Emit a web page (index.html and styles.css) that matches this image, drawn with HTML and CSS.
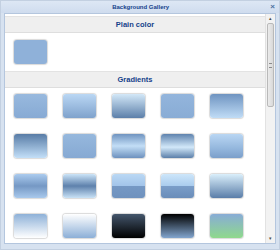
FILE: index.html
```html
<!DOCTYPE html>
<html lang="en">
<head>
    <meta charset="UTF-8">
    <title>Background Gallery</title>
    <link rel="stylesheet" href="styles.css">
</head>
<body>
    <div class="window">
        <div class="titlebar">
            <span class="title">Background Gallery</span>
            <span class="close">&#215;</span>
        </div>
        <div class="body">
            <div class="content">
                <div class="section-header">Plain color</div>
                <div class="plain">
                    <div class="tile" style="background: #8fb1d9;"></div>
                </div>
                <div class="section-header">Gradients</div>
                <div class="grid">
                    <div class="tile" style="background: linear-gradient(#98b9de, #87aad4);"></div>
                    <div class="tile" style="background: linear-gradient(#bad7f4, #7fa2cc);"></div>
                    <div class="tile" style="background: linear-gradient(#d3e8f8, #5c7fa9);"></div>
                    <div class="tile" style="background: linear-gradient(#93b5dc, #89acd5);"></div>
                    <div class="tile" style="background: linear-gradient(#6f94c1, #c0dcf6);"></div>

                    <div class="tile" style="background: linear-gradient(#587ca6, #c3dff8);"></div>
                    <div class="tile" style="background: linear-gradient(#96b8dd, #86a9d3);"></div>
                    <div class="tile" style="background: linear-gradient(#7094c0, #c3def6 50%, #6d91be);"></div>
                    <div class="tile" style="background: linear-gradient(#5f83ae, #d2e8f9 55%, #5b7fa9);"></div>
                    <div class="tile" style="background: linear-gradient(#b9d6f3, #94b7dd 60%, #7b9fca);"></div>

                    <div class="tile" style="background: linear-gradient(#abcbee, #7598c4 50%, #a9c9ec);"></div>
                    <div class="tile" style="background: linear-gradient(#cbe4f8, #5e81ac 50%, #c9e2f6);"></div>
                    <div class="tile" style="background: linear-gradient(#bad8f4, #a3c5ea 48%, #7598c4 52%, #6f92be);"></div>
                    <div class="tile" style="background: linear-gradient(#cde6fa, #abcdee 48%, #7a9dc8 52%, #6a8db9);"></div>
                    <div class="tile" style="background: linear-gradient(#daeffb, #5a7da8);"></div>

                    <div class="tile" style="background: linear-gradient(#8eb1d8, #ffffff);"></div>
                    <div class="tile" style="background: linear-gradient(#ffffff, #8cafd7);"></div>
                    <div class="tile" style="background: linear-gradient(#44566c, #000000);"></div>
                    <div class="tile" style="background: linear-gradient(#000000, #82a5ce);"></div>
                    <div class="tile" style="background: linear-gradient(#88acd6, #8fd98c);"></div>
                </div>
            </div>
            <div class="scrollbar">
                <span class="arrow">&#9652;</span>
                <div class="track">
                    <div class="thumb"><span class="grip"></span></div>
                </div>
                <span class="arrow">&#9662;</span>
            </div>
        </div>
    </div>
</body>
</html>
```

FILE: styles.css
```css
html, body {
    margin: 0;
    padding: 0;
    background: #ffffff;
}
.window {
    width: 280px;
    height: 250px;
    box-sizing: border-box;
    border: 1px solid #c3d0e1;
    background: #d7e2f0;
    display: flex;
    flex-direction: column;
    font-family: "Liberation Sans", Arial, sans-serif;
}
.titlebar {
    height: 12px;
    display: flex;
    align-items: center;
    padding: 0 4px;
    background: linear-gradient(#dde7f4, #cfdcee);
}
.title {
    flex: 1;
    text-align: center;
    font-size: 6px;
    font-weight: bold;
    color: #15428b;
    padding-left: 6px;
}
.close {
    font-size: 8px;
    font-weight: bold;
    color: #4d6f9e;
    line-height: 8px;
}
.body {
    flex: 1;
    display: flex;
    margin: 0 3px 5px 3px;
    border: 1px solid #b4c6de;
    background: #ffffff;
    overflow: hidden;
}
.content {
    flex: 1;
    overflow: hidden;
    padding-top: 2px;
}
.section-header {
    height: 15px;
    line-height: 15px;
    background: #efefef;
    border-top: 1px solid #e3e3e3;
    border-bottom: 1px solid #dedede;
    text-align: center;
    font-size: 7.5px;
    font-weight: bold;
    color: #15428b;
}
.plain {
    padding: 7px 0 7px 9px;
}
.grid {
    display: grid;
    grid-template-columns: repeat(5, 33px);
    column-gap: 16px;
    row-gap: 16px;
    padding: 6px 0 0 9px;
}
.tile {
    width: 33px;
    height: 24px;
    border-radius: 3px;
    box-shadow: 0 0 1px 1px #dadada;
}
.scrollbar {
    width: 9px;
    display: flex;
    flex-direction: column;
    align-items: center;
    background: #f2f2f2;
    border-left: 1px solid #e2e2e2;
}
.arrow {
    font-size: 5px;
    line-height: 9px;
    color: #4c4c4c;
}
.track {
    flex: 1;
    width: 100%;
}
.thumb {
    margin: 0 1px;
    height: 82px;
    background: linear-gradient(90deg, #ebebeb, #d9d9d9);
    border: 1px solid #b9b9b9;
    border-radius: 2px;
    display: flex;
    align-items: center;
    justify-content: center;
}
.grip {
    width: 3px;
    height: 3px;
    border-top: 1px solid #8c8c8c;
    border-bottom: 1px solid #8c8c8c;
}
```
